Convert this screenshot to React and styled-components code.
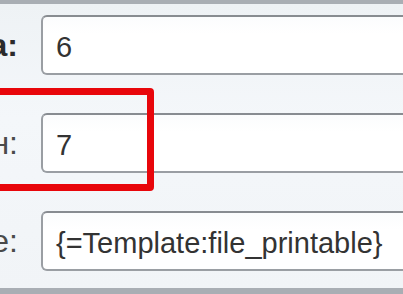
import React from "react";
import styled, { createGlobalStyle } from "styled-components";

const fields = [
  { label: "Ширина:", value: "6", strong: true },
  { label: "Толщин:", value: "7" },
  { label: "Template:", value: "{=Template:file_printable}" }
];

const GlobalStyle = createGlobalStyle`
  html, body {
    margin: 0;
    padding: 0;
    overflow: hidden;
    background: #f2f5f8;
  }
`;

const Page = styled.div`
  position: relative;
  width: 403px;
  height: 294px;
  box-sizing: border-box;
  border-top: 4px solid #a9aeb4;
  border-bottom: 6px solid #a9aeb4;
  background: linear-gradient(to bottom, #eef2f5, #f4f7fa 40%, #f1f4f7);
  overflow: hidden;
  font-family: "Liberation Sans", Arial, sans-serif;
`;

const Form = styled.div`
  display: flex;
  flex-direction: column;
  gap: 38px;
  padding-top: 11px;
`;

const Row = styled.div`
  display: flex;
  align-items: center;
  gap: 23px;
`;

const Label = styled.div`
  flex: 0 0 18px;
  min-width: 0;
  display: flex;
  justify-content: flex-end;
  white-space: nowrap;
  font-size: 32px;
  font-weight: ${props => (props.strong ? 700 : 400)};
  color: ${props => (props.strong ? "#2b2b2b" : "#4a4a4a")};
  overflow: visible;
`;

const Field = styled.div`
  flex: 0 0 420px;
  height: 60px;
  box-sizing: border-box;
  display: flex;
  align-items: center;
  padding: 4px 0 0 13px;
  border: 2px solid #9a9ea3;
  border-top-color: #888c91;
  border-radius: 6px;
  background: linear-gradient(to bottom, #fbfcfd, #ffffff 30%);
  font-size: 29px;
  color: #333;
  white-space: nowrap;
`;

const Highlight = styled.div`
  position: absolute;
  left: -12px;
  top: 84px;
  width: 166px;
  height: 103px;
  box-sizing: border-box;
  border: 7px solid #e8060b;
  border-radius: 4px;
  pointer-events: none;
`;

const App = () => (
  <>
    <GlobalStyle />
    <Page>
      <Form>
        {fields.map(field => (
          <Row key={field.value}>
            <Label strong={field.strong}>
              <span>{field.label}</span>
            </Label>
            <Field>{field.value}</Field>
          </Row>
        ))}
      </Form>
      <Highlight />
    </Page>
  </>
);

export default App;
